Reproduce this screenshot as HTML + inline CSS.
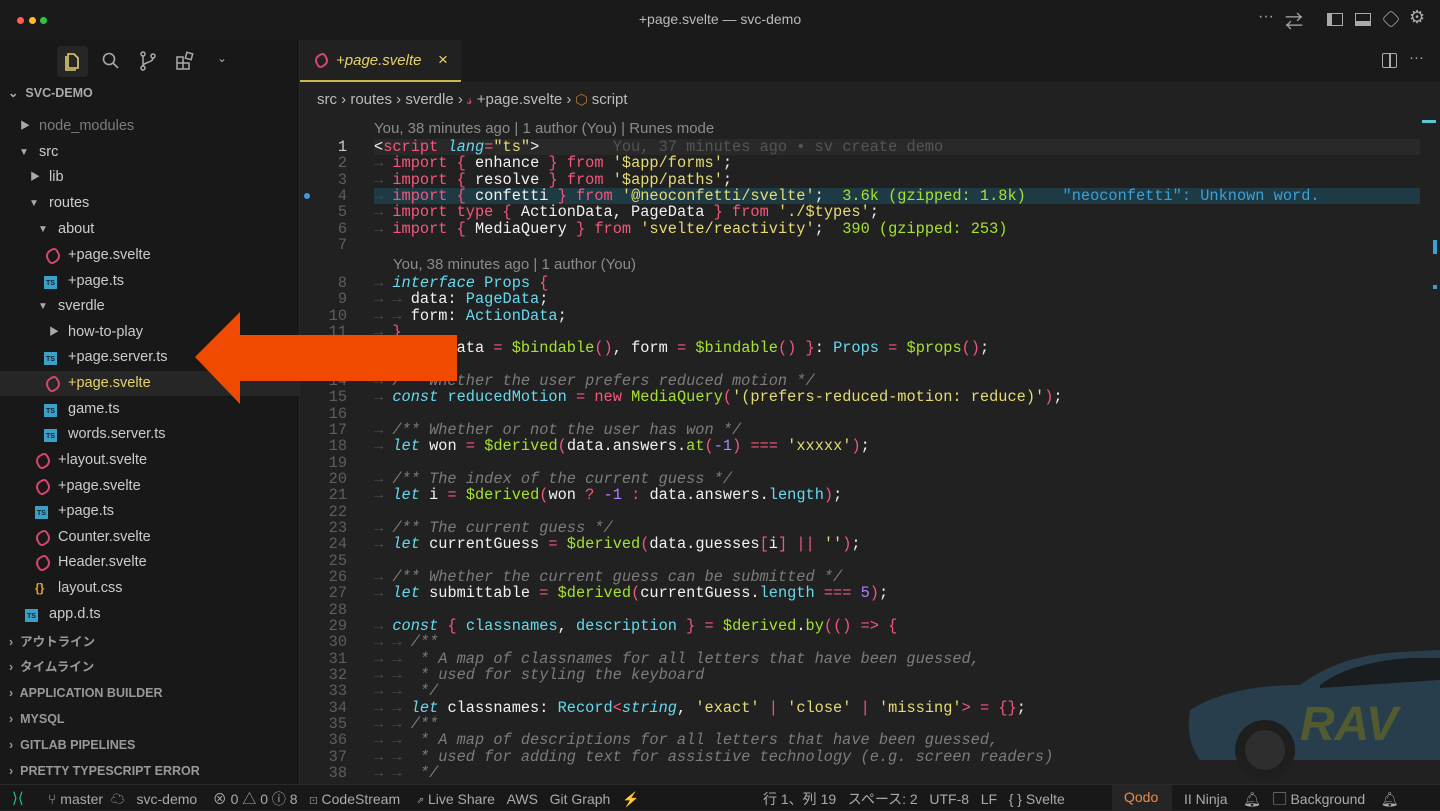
<!DOCTYPE html>
<html><head><meta charset="utf-8"><style>
*{margin:0;padding:0;box-sizing:border-box}
body{width:1440px;height:810px;overflow:hidden;background:#212121;font-family:"Liberation Sans","Noto Sans CJK JP",sans-serif;color:#ccc;position:relative}
.abs{position:absolute}
#title{left:0;top:0;width:1440px;height:40px;background:#1a1a1a}
#side{left:0;top:40px;width:300px;height:744px;background:#181818;border-right:1px solid #2a2a2a}
#tabs{left:300px;top:40px;width:1140px;height:42px;background:#1a1a1a}
#status{left:0;top:784px;width:1440px;height:26px;background:#181818;border-top:1px solid #2a2a2a;font-size:14px;color:#aaa}
.row{position:absolute;left:0;width:299px;height:25px;font-size:14.5px;line-height:25px;color:#ccc;white-space:nowrap}
.row span{position:absolute}
.chev{color:#aaa;font-size:10px}
.sv{width:14px;height:14px;border:2px solid #d4476a;border-radius:50% 30% 50% 30%;transform:rotate(-30deg);top:6px}
.ts{width:13px;height:13px;background:#3b9fc6;top:7px;font-size:7px;line-height:15px;color:#123;font-weight:bold;text-align:center}
.sec{position:absolute;left:0;font-size:12.5px;font-weight:bold;color:#999;height:25px;line-height:25px}
.code{position:absolute;left:374px;font-family:"Liberation Mono",monospace;font-size:15.3px;line-height:16.33px;white-space:pre;color:#f2f2f2}
.ln{position:absolute;left:300px;width:47px;text-align:right;font-family:"Liberation Mono",monospace;font-size:15.3px;line-height:16.33px;color:#5e5e5e;white-space:pre}
.k{color:#f7567c}.s{color:#e6db74}.t{color:#66d9ef}.i{color:#66d9ef;font-style:italic}.f{color:#a6e22e}.c{color:#7c7c7c;font-style:italic}.n{color:#ae81ff}.a{color:#4a4a3c}.o{color:#f7567c}.g{color:#a6e22e}
.blame{position:absolute;font-size:15px;color:#8b8b8b}
</style></head><body>
<div id="title" class="abs">
 <div class="abs" style="left:17px;top:17px;width:7px;height:7px;border-radius:50%;background:#fe5f57"></div>
 <div class="abs" style="left:29px;top:17px;width:7px;height:7px;border-radius:50%;background:#febc2e"></div>
 <div class="abs" style="left:40px;top:17px;width:7px;height:7px;border-radius:50%;background:#28c840"></div>
 <div class="abs" style="left:0;width:1440px;top:11px;text-align:center;font-size:14px;color:#bbb">+page.svelte — svc-demo</div>
 <div class="abs" style="left:1258px;top:8px;font-size:16px;color:#aaa">···</div>
 <div class="abs" style="left:1285px;top:8px;font-size:18px;color:#aaa">⇄</div>
 <div class="abs" style="left:1327px;top:13px;width:16px;height:13px;border:1.5px solid #aaa;border-left-width:5px"></div>
 <div class="abs" style="left:1355px;top:13px;width:16px;height:13px;border:1.5px solid #aaa;border-bottom-width:5px"></div>
 <div class="abs" style="left:1383px;top:11px;width:16px;height:16px;border:1.5px solid #aaa;border-radius:4px;transform:rotate(45deg) scale(.8)"></div>
 <div class="abs" style="left:1409px;top:7px;font-size:18px;color:#aaa">⚙</div>
</div>
<div id="side" class="abs">
 <div class="abs" style="left:57px;top:6px;width:31px;height:31px;background:#262626;border-radius:4px"></div>
 <svg class="abs" style="left:62px;top:10px" width="22" height="22" viewBox="0 0 22 22" fill="none" stroke="#e0cf6a" stroke-width="1.6"><path d="M6 4h6l4 4v10H6z M4 6v14h10"/></svg>
 <svg class="abs" style="left:100px;top:10px" width="22" height="22" viewBox="0 0 22 22" fill="none" stroke="#aaa" stroke-width="1.6"><circle cx="9" cy="9" r="5.5"/><path d="M13 13l5 5"/></svg>
 <svg class="abs" style="left:137px;top:10px" width="22" height="22" viewBox="0 0 22 22" fill="none" stroke="#aaa" stroke-width="1.5"><circle cx="6" cy="18" r="2"/><circle cx="6" cy="4" r="2"/><circle cx="16" cy="6" r="2"/><path d="M6 6v10M16 8c0 5-10 4-10 8"/></svg>
 <svg class="abs" style="left:174px;top:10px" width="22" height="22" viewBox="0 0 22 22" fill="none" stroke="#aaa" stroke-width="1.5"><path d="M3 7h6v6H3zM3 13h6v6H3zM9 13h6v6H9z"/><rect x="12" y="3" width="6" height="6" transform="rotate(15 15 6)"/></svg>
 <div class="abs" style="left:217px;top:11px;font-size:12px;color:#aaa">⌄</div>
 <div class="abs" style="left:8px;top:45px;font-size:12.5px;font-weight:bold;color:#aaa">⌄&nbsp; SVC-DEMO</div>

 <div class="row" style="top:74px"><span class="chev" style="left:20px">▶</span><span style="left:39px;color:#7d7d7d">node_modules</span></div>
 <div class="row" style="top:100px"><span class="chev" style="left:19px">▼</span><span style="left:39px">src</span></div>
 <div class="row" style="top:125px"><span class="chev" style="left:30px">▶</span><span style="left:49px">lib</span></div>
 <div class="row" style="top:151px"><span class="chev" style="left:29px">▼</span><span style="left:49px">routes</span></div>
 <div class="row" style="top:177px"><span class="chev" style="left:38px">▼</span><span style="left:58px">about</span></div>
 <div class="row" style="top:203px"><span class="sv" style="left:46px"></span><span style="left:68px">+page.svelte</span></div>
 <div class="row" style="top:229px"><span class="ts" style="left:44px">TS</span><span style="left:68px">+page.ts</span></div>
 <div class="row" style="top:254px"><span class="chev" style="left:38px">▼</span><span style="left:58px">sverdle</span></div>
 <div class="row" style="top:280px"><span class="chev" style="left:49px">▶</span><span style="left:68px">how-to-play</span></div>
 <div class="row" style="top:305px"><span class="ts" style="left:44px">TS</span><span style="left:68px">+page.server.ts</span></div>
 <div class="row" style="top:331px;background:#262626"><span class="sv" style="left:46px"></span><span style="left:68px;color:#e6d36a">+page.svelte</span></div>
 <div class="row" style="top:357px"><span class="ts" style="left:44px">TS</span><span style="left:68px">game.ts</span></div>
 <div class="row" style="top:382px"><span class="ts" style="left:44px">TS</span><span style="left:68px">words.server.ts</span></div>
 <div class="row" style="top:408px"><span class="sv" style="left:36px"></span><span style="left:58px">+layout.svelte</span></div>
 <div class="row" style="top:434px"><span class="sv" style="left:36px"></span><span style="left:58px">+page.svelte</span></div>
 <div class="row" style="top:459px"><span class="ts" style="left:35px">TS</span><span style="left:58px">+page.ts</span></div>
 <div class="row" style="top:485px"><span class="sv" style="left:36px"></span><span style="left:58px">Counter.svelte</span></div>
 <div class="row" style="top:510px"><span class="sv" style="left:36px"></span><span style="left:58px">Header.svelte</span></div>
 <div class="row" style="top:536px"><span style="left:35px;color:#e8a03a;font-weight:bold;font-size:12px">{}</span><span style="left:58px">layout.css</span></div>
 <div class="row" style="top:562px"><span class="ts" style="left:25px">TS</span><span style="left:49px">app.d.ts</span></div>
 <div class="sec" style="top:590px;left:9px">›&nbsp; アウトライン</div>
 <div class="sec" style="top:615px;left:9px">›&nbsp; タイムライン</div>
 <div class="sec" style="top:641px;left:9px">›&nbsp; APPLICATION BUILDER</div>
 <div class="sec" style="top:667px;left:9px">›&nbsp; MYSQL</div>
 <div class="sec" style="top:693px;left:9px">›&nbsp; GITLAB PIPELINES</div>
 <div class="sec" style="top:719px;left:9px">›&nbsp; PRETTY TYPESCRIPT ERROR</div>
</div>
<div id="tabs" class="abs">
 <div class="abs" style="left:0;top:0;width:161px;height:42px;background:#212121;border-bottom:2px solid #c9b84a"></div>
 <div class="abs" style="left:15px;top:14px;width:13px;height:13px;border:2px solid #d4476a;border-radius:50% 30% 50% 30%;transform:rotate(-30deg)"></div>
 <div class="abs" style="left:36px;top:12px;font-size:15px;font-style:italic;color:#e6d36a">+page.svelte</div>
 <div class="abs" style="left:138px;top:10px;font-size:17px;color:#e6d36a">×</div>
 <div class="abs" style="left:1082px;top:13px;width:15px;height:15px;border:1.5px solid #aaa;border-radius:2px"></div>
 <div class="abs" style="left:1089px;top:13px;width:1.5px;height:15px;background:#aaa"></div>
 <div class="abs" style="left:1109px;top:9px;font-size:15px;color:#aaa">···</div>
</div>
<div class="abs" style="left:317px;top:91px;font-size:15px;color:#bbb">src › routes › sverdle › <span style="color:#d4476a">𝓈</span> +page.svelte › <span style="color:#e8a03a">⬡</span> script</div>
<div class="blame" style="left:374px;top:120px">You, 38 minutes ago | 1 author (You) | Runes mode</div>
<div class="blame" style="left:393px;top:256px">You, 38 minutes ago | 1 author (You)</div>
<div class="abs" style="left:374px;top:139px;width:1046px;height:16px;background:#292929"></div>
<div class="abs" style="left:374px;top:188px;width:1046px;height:16px;background:#1e3b45"></div>
<div class="abs" style="left:304px;top:193px;width:6px;height:6px;border-radius:50%;background:#3aa0d8"></div>
<div class="ln" style="top:139px"><span style="color:#ccc">1</span>
2
3
4
5
6
7</div>
<div class="ln" style="top:275px">8
9
10
11
12
13
14
15
16
17
18
19
20
21
22
23
24
25
26
27
28
29
30
31
32
33
34
35
36
37
38</div>
<div class="code" style="top:139px">&lt;<span class="k">script</span> <span class="i">lang</span><span class="k">=</span><span class="s">"ts"</span>&gt;        <span style="color:#555">You, 37 minutes ago • sv create demo</span>
<span class="a">→ </span><span class="k">import</span> <span class="o">{</span> enhance <span class="o">}</span> <span class="k">from</span> <span class="s">'$app/forms'</span>;
<span class="a">→ </span><span class="k">import</span> <span class="o">{</span> resolve <span class="o">}</span> <span class="k">from</span> <span class="s">'$app/paths'</span>;
<span class="a">→ </span><span class="k">import</span> <span class="o">{</span> confetti <span class="o">}</span> <span class="k">from</span> <span class="s">'@neoconfetti/svelte'</span>;  <span class="g">3.6k (gzipped: 1.8k)</span>    <span style="color:#3aa0d8">"neoconfetti": Unknown word.</span>
<span class="a">→ </span><span class="k">import</span> <span class="k">type</span> <span class="o">{</span> ActionData, PageData <span class="o">}</span> <span class="k">from</span> <span class="s">'./$types'</span>;
<span class="a">→ </span><span class="k">import</span> <span class="o">{</span> MediaQuery <span class="o">}</span> <span class="k">from</span> <span class="s">'svelte/reactivity'</span>;  <span class="g">390 (gzipped: 253)</span>
</div>
<div class="code" style="top:275px"><span class="a">→ </span><span class="i">interface</span> <span class="t">Props</span> <span class="o">{</span>
<span class="a">→ → </span>data: <span class="t">PageData</span>;
<span class="a">→ → </span>form: <span class="t">ActionData</span>;
<span class="a">→ </span><span class="o">}</span>
<span class="a">→ </span><span class="i">let</span> <span class="o">{</span> data <span class="k">=</span> <span class="f">$bindable</span><span class="o">()</span>, form <span class="k">=</span> <span class="f">$bindable</span><span class="o">()</span> <span class="o">}</span>: <span class="t">Props</span> <span class="k">=</span> <span class="f">$props</span><span class="o">()</span>;

<span class="a">→ </span><span class="c">/** Whether the user prefers reduced motion */</span>
<span class="a">→ </span><span class="i">const</span> <span class="t">reducedMotion</span> <span class="k">=</span> <span class="k">new</span> <span class="f">MediaQuery</span><span class="o">(</span><span class="s">'(prefers-reduced-motion: reduce)'</span><span class="o">)</span>;

<span class="a">→ </span><span class="c">/** Whether or not the user has won */</span>
<span class="a">→ </span><span class="i">let</span> won <span class="k">=</span> <span class="f">$derived</span><span class="o">(</span>data.answers.<span class="f">at</span><span class="o">(</span><span class="n">-1</span><span class="o">)</span> <span class="k">===</span> <span class="s">'xxxxx'</span><span class="o">)</span>;

<span class="a">→ </span><span class="c">/** The index of the current guess */</span>
<span class="a">→ </span><span class="i">let</span> i <span class="k">=</span> <span class="f">$derived</span><span class="o">(</span>won <span class="k">?</span> <span class="n">-1</span> <span class="k">:</span> data.answers.<span class="t">length</span><span class="o">)</span>;

<span class="a">→ </span><span class="c">/** The current guess */</span>
<span class="a">→ </span><span class="i">let</span> currentGuess <span class="k">=</span> <span class="f">$derived</span><span class="o">(</span>data.guesses<span class="o">[</span>i<span class="o">]</span> <span class="k">||</span> <span class="s">''</span><span class="o">)</span>;

<span class="a">→ </span><span class="c">/** Whether the current guess can be submitted */</span>
<span class="a">→ </span><span class="i">let</span> submittable <span class="k">=</span> <span class="f">$derived</span><span class="o">(</span>currentGuess.<span class="t">length</span> <span class="k">===</span> <span class="n">5</span><span class="o">)</span>;

<span class="a">→ </span><span class="i">const</span> <span class="o">{</span> <span class="t">classnames</span>, <span class="t">description</span> <span class="o">}</span> <span class="k">=</span> <span class="f">$derived</span>.<span class="f">by</span><span class="o">(()</span> <span class="k">=&gt;</span> <span class="o">{</span>
<span class="a">→ → </span><span class="c">/**</span>
<span class="a">→ → </span><span class="c"> * A map of classnames for all letters that have been guessed,</span>
<span class="a">→ → </span><span class="c"> * used for styling the keyboard</span>
<span class="a">→ → </span><span class="c"> */</span>
<span class="a">→ → </span><span class="i">let</span> classnames: <span class="t">Record</span><span class="k">&lt;</span><span class="i">string</span>, <span class="s">'exact'</span> <span class="k">|</span> <span class="s">'close'</span> <span class="k">|</span> <span class="s">'missing'</span><span class="k">&gt;</span> <span class="k">=</span> <span class="o">{}</span>;
<span class="a">→ → </span><span class="c">/**</span>
<span class="a">→ → </span><span class="c"> * A map of descriptions for all letters that have been guessed,</span>
<span class="a">→ → </span><span class="c"> * used for adding text for assistive technology (e.g. screen readers)</span>
<span class="a">→ → </span><span class="c"> */</span></div>
<svg class="abs" style="left:1170px;top:640px;opacity:.55" width="270" height="145" viewBox="0 0 270 145">
 <path d="M20 70 Q60 45 130 45 Q170 15 230 12 L270 10 L270 120 L30 120 Q15 100 20 70z" fill="#2e5670"/>
 <path d="M150 45 Q180 22 240 18 L270 18 L270 40 L150 48z" fill="#151a20"/>
 <text x="130" y="100" font-family="Liberation Sans" font-weight="bold" font-style="italic" font-size="48" fill="#7a8a3e">RAV</text>
 <circle cx="95" cy="110" r="30" fill="#1c1c1c"/><circle cx="95" cy="110" r="20" fill="#3a3a3a"/>
</svg>
<div class="abs" style="left:1422px;top:120px;width:14px;height:3px;background:#5ac8d8"></div>
<div class="abs" style="left:1433px;top:240px;width:4px;height:14px;background:#3aa0d8"></div>
<div class="abs" style="left:1433px;top:285px;width:4px;height:4px;background:#3aa0d8"></div>
<svg class="abs" style="left:195px;top:312px" width="263" height="93" viewBox="0 0 263 93"><path d="M0 45 L45 0 L45 23 L262 23 L262 69 L45 69 L45 92z" fill="#f04a00"/></svg>
<div id="status" class="abs">
 <div class="abs" style="left:12px;top:4px;color:#2fbf71;font-size:15px">⟩⟨</div>
 <div class="abs" style="left:48px;top:4px">⑂ master &nbsp;☁ &nbsp;&nbsp;svc-demo &nbsp;&nbsp;&nbsp;⊗ 0 △ 0 ⓘ 8 &nbsp;&nbsp;⊡ CodeStream &nbsp;&nbsp;&nbsp;⇗ Live Share &nbsp;&nbsp;AWS &nbsp;&nbsp;Git Graph &nbsp;&nbsp;⚡</div>
 <div class="abs" style="left:763px;top:4px">行 1、列 19 &nbsp;&nbsp;スペース: 2 &nbsp;&nbsp;UTF-8 &nbsp;&nbsp;LF &nbsp;&nbsp;{ } Svelte</div>
 <div class="abs" style="left:1112px;top:0;width:60px;height:26px;background:#252525"></div>
 <div class="abs" style="left:1124px;top:4px;color:#f08a4b">Qodo</div>
 <div class="abs" style="left:1184px;top:4px">II Ninja &nbsp;&nbsp;&nbsp;🔔︎ &nbsp;&nbsp;▢ Background &nbsp;&nbsp;&nbsp;🔔︎</div>
</div>
</body></html>
